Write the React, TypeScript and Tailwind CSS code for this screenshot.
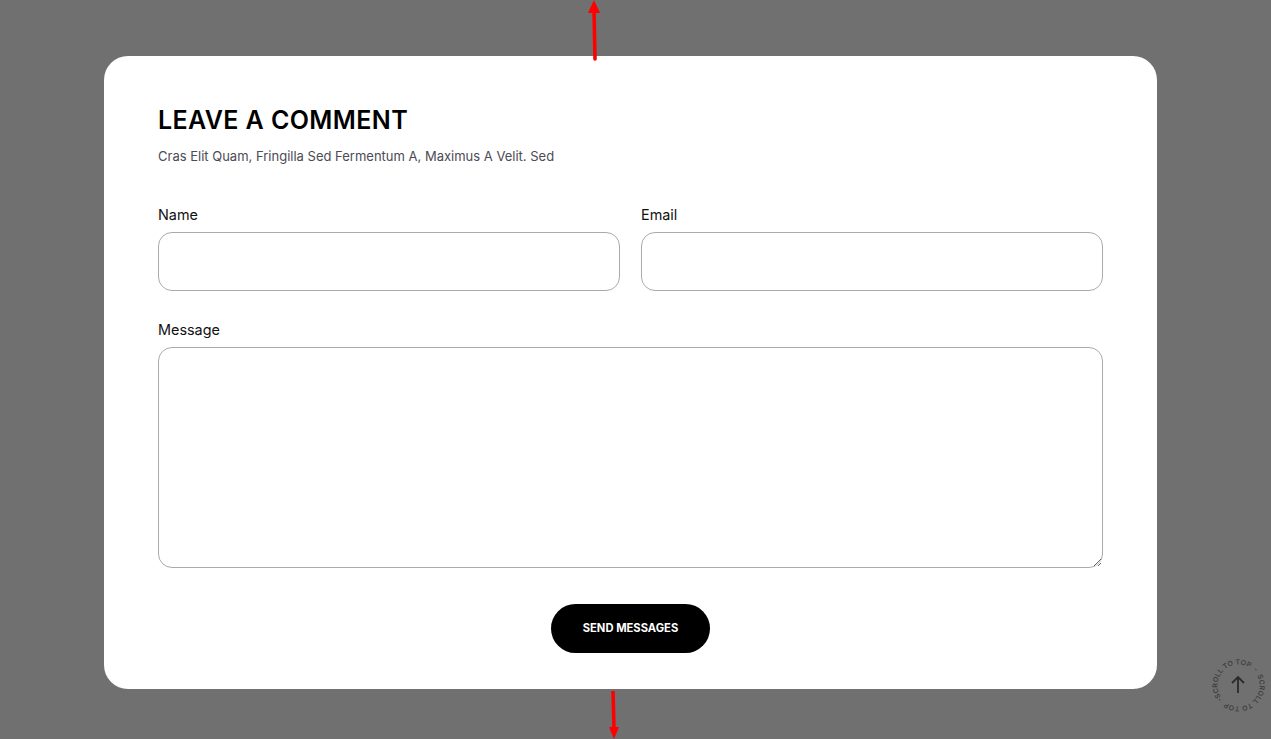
const font = { fontFamily: 'Inter, "Noto Sans", sans-serif' };

const inputClass = 'h-[59px] w-full rounded-[14px] border border-[#aaaaaa] bg-white outline-none';

const ScrollTop = () => (
  <svg className="absolute left-[1206px] top-[653px]" width="65" height="65" viewBox="0 0 65 65">
    <defs>
      <path id="ring" d="M32.5 32.5m-21 0a21 21 0 1 1 42 0a21 21 0 1 1 -42 0" />
    </defs>
    <g transform="rotate(-33 32.5 32.5)">
      <text fontSize="7" fontWeight="600" fill="#3e3e3e" fontFamily="Inter, sans-serif">
        <textPath href="#ring" textLength="131" lengthAdjust="spacing">{'SCROLL TO TOP \u00a0-\u00a0 SCROLL TO TOP \u00a0-'}</textPath>
      </text>
    </g>
    <path d="M32 40V24M26 30l6-6 6 6" fill="none" stroke="#2b2b2b" strokeWidth="1.8" />
  </svg>
);

const RedArrows = () => (
  <>
    <svg className="absolute left-[584px] top-0" width="20" height="62" viewBox="0 0 20 62">
      <path d="M11 59L10 10" stroke="#ff0000" strokeWidth="3.6" strokeLinecap="round" />
      <path d="M10 0L4 13H16Z" fill="#ff0000" />
    </svg>
    <svg className="absolute left-[604px] top-[689px]" width="20" height="50" viewBox="0 0 20 50">
      <path d="M9 2L10 40" stroke="#ff0000" strokeWidth="3.6" />
      <path d="M10 50L5 38H15Z" fill="#ff0000" />
    </svg>
  </>
);

export default function App() {
  return (
    <div className="relative h-[739px] overflow-hidden bg-[#707070] pl-[104px] pt-[56px]" style={font}>
      <div className="h-[633px] w-[1053px] rounded-[24px] bg-white px-[54px] pt-[46px]">
        <h2 className="text-[25px] leading-[36px] font-semibold tracking-[0.4px] text-black">LEAVE A COMMENT</h2>
        <p className="mt-[8px] text-[13px] leading-[20px] text-[#4b4b55]">
          Cras Elit Quam, Fringilla Sed Fermentum A, Maximus A Velit. Sed
        </p>

        <div className="mt-[39px] grid grid-cols-2 gap-x-[21px]">
          <div>
            <label className="block text-[14.4px] leading-[20px] text-[#111]">Name</label>
            <input className={`mt-[7px] ${inputClass}`} />
          </div>
          <div>
            <label className="block text-[14.4px] leading-[20px] text-[#111]">Email</label>
            <input className={`mt-[7px] ${inputClass}`} />
          </div>
        </div>

        <label className="mt-[29px] block text-[14.4px] leading-[20px] text-[#111]">Message</label>
        <textarea className="mt-[7px] block h-[221px] w-full rounded-[14px] border border-[#aaaaaa] bg-white outline-none" />

        <div className="mt-[36px] flex justify-center">
          <button className="h-[49px] w-[159px] rounded-full bg-black text-[11.2px] font-bold text-white">SEND MESSAGES</button>
        </div>
      </div>

      <RedArrows />
      <ScrollTop />
    </div>
  );
}
